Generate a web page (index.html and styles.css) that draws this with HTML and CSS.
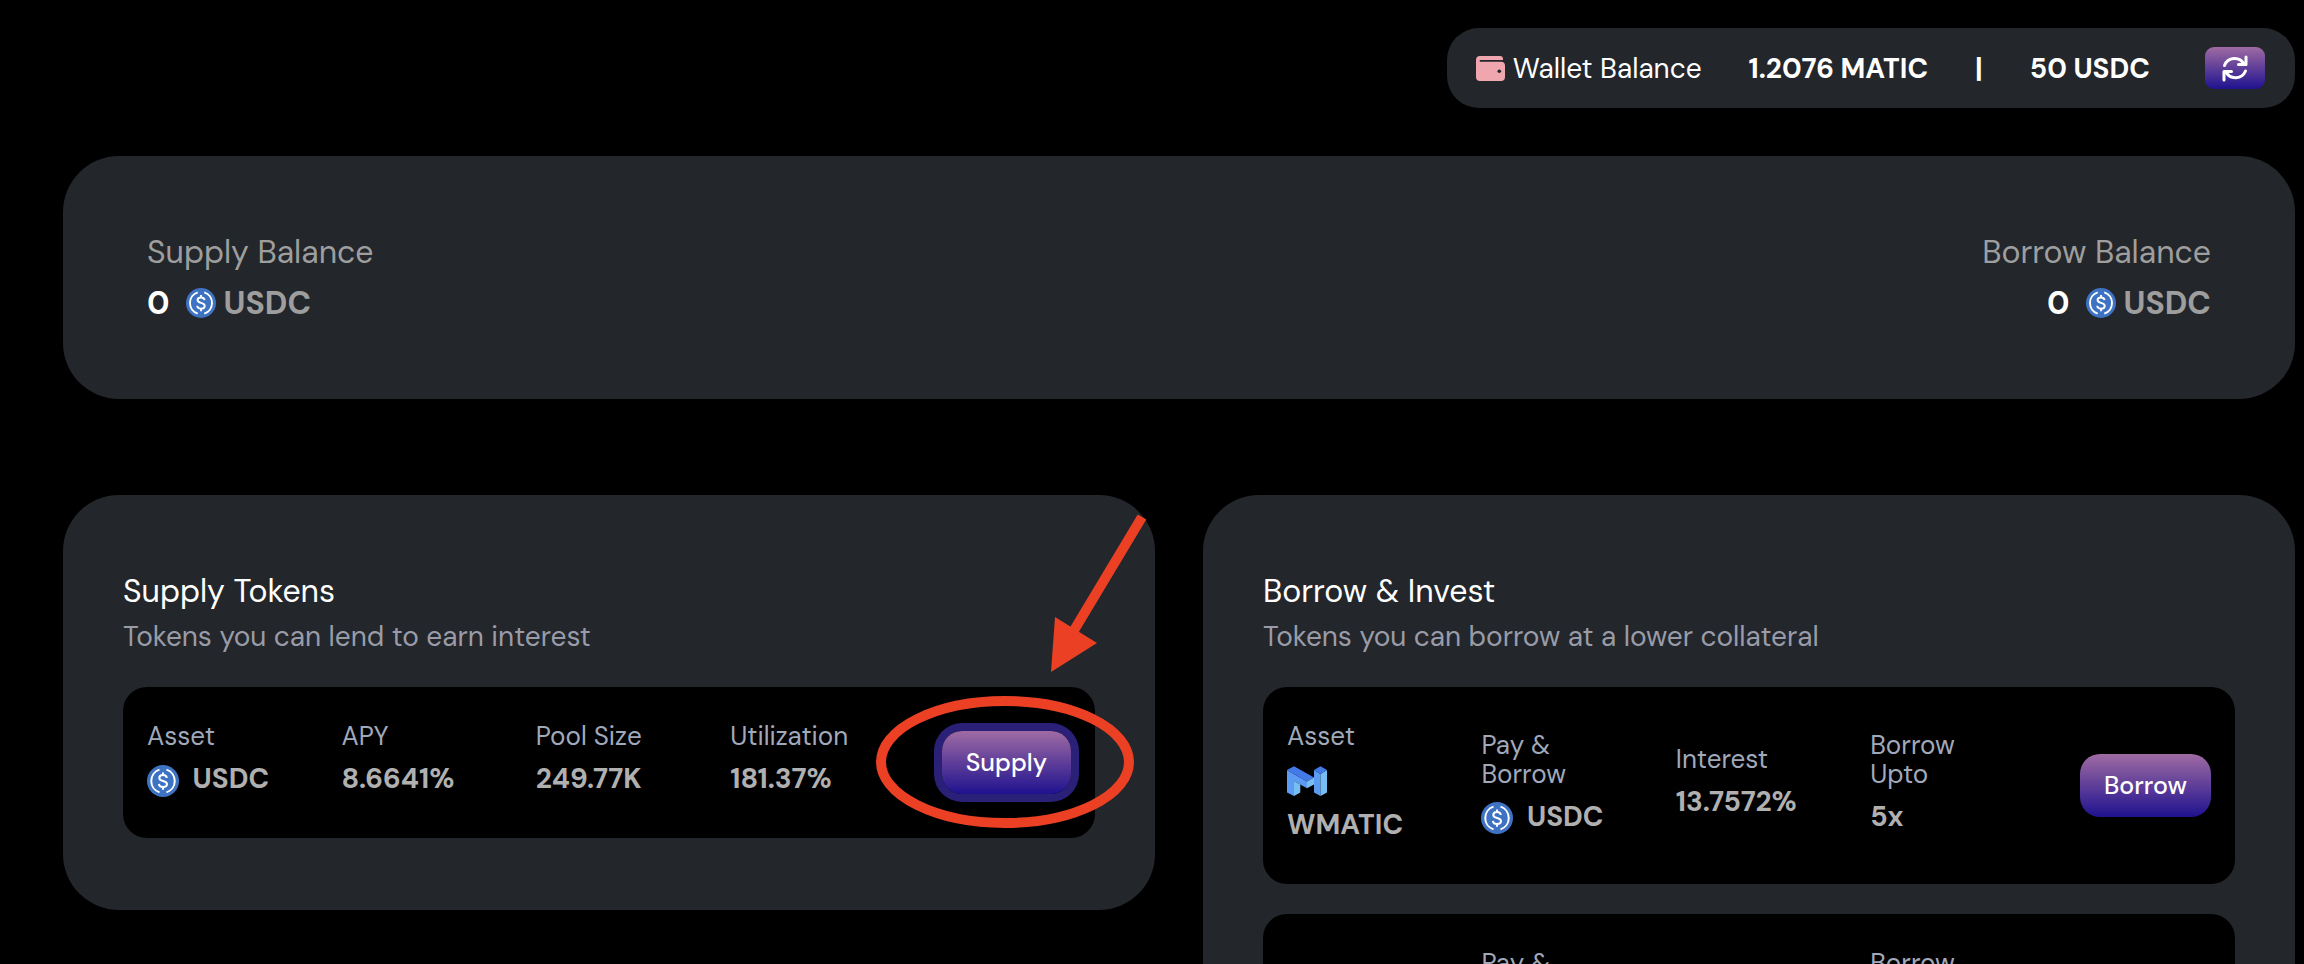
FILE: index.html
```html
<!DOCTYPE html>
<html lang="en">
  <head>
    <meta charset="UTF-8" />
    <meta name="viewport" content="width=device-width, initial-scale=1.0" />
    <title>Lend &amp; Borrow</title>
    <link rel="stylesheet" href="styles.css">
  </head>
  <body>
    <!-- shared icons -->
    <svg class="sprite" aria-hidden="true">
      <symbol id="usdc" viewBox="0 0 32 32">
        <circle cx="16" cy="16" r="16" fill="#3e73c4" />
        <g fill="none" stroke="#fff" stroke-width="2">
          <path d="M12.5 4.6a12 12 0 0 0 0 22.8M19.5 4.6a12 12 0 0 1 0 22.8" />
          <path d="M19.8 13c-.2-1.9-1.6-2.9-3.8-2.9-2.3 0-3.7 1.1-3.7 2.8 0 4.2 7.7 1.9 7.7 6.2 0 1.8-1.6 2.9-4 2.9-2.5 0-3.9-1.1-4.1-3.100M16 7.500v3M16 21.700v3" />
        </g>
      </symbol>
      <symbol id="matic" viewBox="0 0 40 32">
        <path fill="#5b9bf3" d="M0 5v22.500L7 31V16l13 7.300V16.500z" />
        <path fill="#447ae8" d="M0 5l7-3.700 20 11.200-7 4z" />
        <path fill="#76bdf2" d="M7 16l6.300 3.500V27.500L7 31z" />
        <path fill="#76bdf2" d="M20 16.500l7-4v7l-7 3.800z" />
        <path fill="#5b9bf3" d="M27 5l6.500 4v22L27 27.500z" />
        <path fill="#76bdf2" d="M33.500 9 40 5v22.500L33.500 31z" />
        <path fill="#447ae8" d="M27 5l6.500-3.700L40 5l-6.500 4z" />
      </symbol>
    </svg>

    <div class="app">
      <header class="wallet">
        <div class="walletLabel">
          <svg class="walletIcon" viewBox="0 0 29 25" aria-hidden="true">
            <path fill="#efa6ae" d="M4 0h20a3 3 0 0 1 3 3v1H4.500a.9.9 0 0 0 0 1.800H25a4 4 0 0 1 4 4V21a4 4 0 0 1-4 4H4a4 4 0 0 1-4-4V4a4 4 0 0 1 4-4z" />
            <circle cx="23.300" cy="15.200" r="1.800" fill="#23262a" />
          </svg>
          <span>Wallet Balance</span>
        </div>
        <div class="walletAmounts">
          <strong>1.2076 MATIC</strong>
          <strong>|</strong>
          <strong>50 USDC</strong>
        </div>
        <button type="button" class="refresh" aria-label="Refresh balance">
          <svg viewBox="0 0 28 28" aria-hidden="true">
            <g fill="none" stroke="#fff" stroke-width="3" stroke-linecap="round" stroke-linejoin="round">
              <path d="M3.500 11.500a10.800 10.800 0 0 1 19.500-1.500M25 3v7.500h-7.500" />
              <path d="M24.500 17a10.800 10.800 0 0 1-19.500 1M3 26v-8.500h7.500" />
            </g>
          </svg>
        </button>
      </header>

      <section class="card balances">
        <div class="balance">
          <div class="balanceLabel">Supply Balance</div>
          <div class="balanceValue">
            <strong class="amount">0</strong>
            <svg class="coin" aria-hidden="true"><use href="#usdc" /></svg>
            <strong>USDC</strong>
          </div>
        </div>
        <div class="balance balanceRight">
          <div class="balanceLabel">Borrow Balance</div>
          <div class="balanceValue">
            <strong class="amount">0</strong>
            <svg class="coin" aria-hidden="true"><use href="#usdc" /></svg>
            <strong>USDC</strong>
          </div>
        </div>
      </section>

      <main class="markets">
        <section class="card">
          <h2>Supply Tokens</h2>
          <p>Tokens you can lend to earn interest</p>
          <div class="rows">
            <div class="row">
              <div class="cell">
                <div class="label">Asset</div>
                <div class="value"><svg class="token" aria-hidden="true"><use href="#usdc" /></svg> USDC</div>
              </div>
              <div class="cell">
                <div class="label">APY</div>
                <div class="value">8.6641%</div>
              </div>
              <div class="cell">
                <div class="label">Pool Size</div>
                <div class="value">249.77K</div>
              </div>
              <div class="cell">
                <div class="label">Utilization</div>
                <div class="value">181.37%</div>
              </div>
              <div class="cell action">
                <div class="marked">
                  <button type="button" class="btn active">Supply</button>
                  <!-- pointer to the supply button -->
                  <svg class="pointer" viewBox="0 0 280 322" aria-hidden="true">
                    <ellipse cx="134" cy="250" rx="124" ry="61" />
                    <path class="shaft" d="M271 5 202 120" />
                    <path class="head" d="M180 160l4-55 42 26z" />
                  </svg>
                </div>
              </div>
            </div>
          </div>
        </section>

        <section class="card">
          <h2>Borrow &amp; Invest</h2>
          <p>Tokens you can borrow at a lower collateral</p>
          <div class="rows">
            <div class="row">
              <div class="cell">
                <div class="label">Asset</div>
                <div class="value"><svg class="token wide" aria-hidden="true"><use href="#matic" /></svg> WMATIC</div>
              </div>
              <div class="cell">
                <div class="label">Pay &amp; Borrow</div>
                <div class="value"><svg class="token" aria-hidden="true"><use href="#usdc" /></svg> USDC</div>
              </div>
              <div class="cell">
                <div class="label">Interest</div>
                <div class="value">13.7572%</div>
              </div>
              <div class="cell">
                <div class="label">Borrow Upto</div>
                <div class="value">5x</div>
              </div>
              <div class="cell action">
                <button type="button" class="btn">Borrow</button>
              </div>
            </div>
            <div class="row">
              <div class="cell">
                <div class="label">Asset</div>
                <div class="value">WETH</div>
              </div>
              <div class="cell">
                <div class="label">Pay &amp; Borrow</div>
                <div class="value"><svg class="token" aria-hidden="true"><use href="#usdc" /></svg> USDC</div>
              </div>
              <div class="cell">
                <div class="label">Interest</div>
                <div class="value">13.7572%</div>
              </div>
              <div class="cell">
                <div class="label">Borrow Upto</div>
                <div class="value">5x</div>
              </div>
              <div class="cell action">
                <button type="button" class="btn">Borrow</button>
              </div>
            </div>
          </div>
        </section>
      </main>
    </div>
  </body>
</html>
```

FILE: styles.css
```css
* {
  box-sizing: border-box;
}
body {
  margin: 0;
  background-color: #000;
  color: #fff;
  font-family: "DM Sans", Inter, "Liberation Sans", sans-serif;
  font-size: 28px;
}
button {
  border: none;
  color: #fff;
  font-family: inherit;
  background: linear-gradient(#9f6ba3, #1f128f);
  cursor: pointer;
}
svg {
  overflow: visible;
}
.sprite {
  position: absolute;
  width: 0;
  height: 0;
}
.app {
  height: 100vh;
  overflow: hidden;
  padding: 28px 9px 0 63px;
  display: flex;
  flex-direction: column;
}

/* wallet bar */
.wallet {
  align-self: flex-end;
  display: flex;
  align-items: center;
  gap: 47px;
  height: 80px;
  flex-shrink: 0;
  padding: 0 30px 0 29px;
  border-radius: 32px;
  background-color: #23262a;
}
.walletLabel {
  display: flex;
  align-items: center;
  gap: 8px;
}
.walletIcon {
  width: 29px;
  height: 25px;
}
.walletAmounts {
  display: flex;
  gap: 47px;
  margin-right: 8px;
}
.refresh {
  display: flex;
  align-items: center;
  justify-content: center;
  width: 60px;
  height: 42px;
  padding: 0;
  border-radius: 9px;
}
.refresh svg {
  width: 28px;
  height: 28px;
}

.card {
  border-radius: 56px;
  padding: 72px 60px;
  background-color: #23262a;
}

/* supply and borrow balances */
.balances {
  display: flex;
  justify-content: space-between;
  flex-shrink: 0;
  margin-top: 48px;
  padding: 72px 84px;
  color: #9e9e9e;
  font-size: 32px;
}
.balanceLabel {
  line-height: 48px;
  margin-bottom: 3px;
}
.balanceValue {
  display: flex;
  align-items: center;
  gap: 8px;
  line-height: 48px;
}
.balanceRight .balanceValue {
  justify-content: flex-end;
}
.amount {
  color: #fff;
  margin-right: 8px;
}
.coin {
  width: 30px;
  height: 30px;
}

/* markets */
.markets {
  display: grid;
  grid-template-columns: 1fr 1fr;
  align-items: start;
  gap: 48px;
  margin-top: 96px;
}
h2 {
  margin: 0;
  font-size: 32px;
  font-weight: 400;
  line-height: 48px;
}
p {
  margin: 0 0 28px;
  color: #999ca8;
  line-height: 44px;
}
.rows {
  display: grid;
  gap: 30px;
}
.row {
  display: grid;
  grid-template-columns: repeat(5, 1fr);
  align-items: center;
  padding: 35px 0 36px;
  border-radius: 24px;
  background-color: #000;
}
.cell {
  min-width: 0;
  padding: 0 24px;
}
.label {
  margin-bottom: 5px;
  color: #a0a9ba;
  font-size: 26px;
  line-height: 29px;
}
.value {
  color: #b0b0b0;
  font-weight: 700;
  line-height: 46px;
}
.token {
  width: 32px;
  height: 32px;
  margin-right: 7px;
  vertical-align: middle;
}
.token.wide {
  width: 40px;
}
.action {
  display: flex;
  justify-content: flex-end;
}
.btn {
  display: block;
  height: 63px;
  padding: 0 24px;
  border-radius: 20px;
  font-size: 25px;
  font-weight: 500;
}
.btn.active {
  box-shadow: 0 0 0 8px #2a2077;
}
.marked {
  position: relative;
}
.pointer {
  position: absolute;
  right: -80px;
  bottom: -40px;
  width: 280px;
  height: 322px;
  fill: none;
  stroke: #ec4024;
  stroke-width: 10;
  pointer-events: none;
}
.pointer .head {
  fill: #ec4024;
  stroke: none;
}
```
